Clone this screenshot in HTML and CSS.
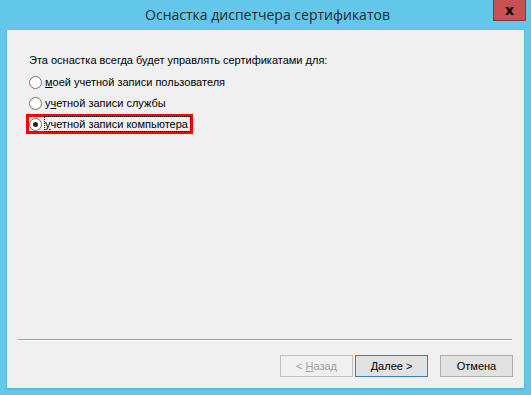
FILE: index.html
```html
<!DOCTYPE html>
<html lang="ru">
<head>
    <meta charset="UTF-8">
    <title>Оснастка диспетчера сертификатов</title>
    <link rel="stylesheet" href="styles.css">
</head>
<body>
    <div class="window">
        <div class="titlebar">
            <span></span>
            <div class="title">Оснастка диспетчера сертификатов</div>
            <button class="close">x</button>
        </div>
        <div class="client">
            <div class="content">
                <p class="intro">Эта оснастка всегда будет управлять сертификатами для:</p>
                <label class="option">
                    <span class="radio"></span>
                    <span><u>м</u>оей учетной записи пользователя</span>
                </label>
                <label class="option">
                    <span class="radio"></span>
                    <span>у<u>ч</u>етной записи службы</span>
                </label>
                <label class="option highlight">
                    <span class="radio checked"></span>
                    <span class="focus"><u>у</u>четной записи компьютера</span>
                </label>
            </div>
            <div class="separator"></div>
            <div class="buttons">
                <button class="btn disabled">&lt; <u>Н</u>азад</button>
                <button class="btn default"><u>Д</u>алее &gt;</button>
                <button class="btn cancel">Отмена</button>
            </div>
        </div>
    </div>
</body>
</html>
```

FILE: styles.css
```css
body {
    margin: 0;
    background-color: #63c7e9;
    font-family: "Liberation Sans", Arial, sans-serif;
}

.window {
    width: 531px;
    height: 395px;
    display: flex;
    flex-direction: column;
}

.titlebar {
    height: 30px;
    display: grid;
    grid-template-columns: 1fr auto 1fr;
    align-items: start;
}

.title {
    font-family: "Open Sans", sans-serif;
    font-size: 14px;
    color: #1e2a30;
    line-height: 30px;
    padding-left: 4px;
}

.close {
    justify-self: end;
    margin-right: 5px;
    width: 33px;
    height: 21px;
    background-color: #c75050;
    border: 1px solid #7d3b3b;
    border-top: none;
    color: #000;
    font-family: "DejaVu Sans", sans-serif;
    font-weight: bold;
    font-size: 14px;
    line-height: 16px;
    padding: 0;
}

.client {
    margin: 0 7px;
    height: 358px;
    background-color: #f0f0f0;
    display: flex;
    flex-direction: column;
    box-shadow: 0 1px 2px rgba(0, 0, 0, 0.15);
}

.content {
    flex: 1;
    padding: 23px 0 0 22px;
    font-size: 11px;
    color: #000;
    display: flex;
    flex-direction: column;
    align-items: flex-start;
}

.intro {
    margin: 0 0 5px;
    line-height: 14px;
}

.option {
    display: flex;
    align-items: center;
    gap: 3px;
    height: 20px;
    margin-bottom: 1px;
}

.radio {
    width: 11px;
    height: 11px;
    border: 1px solid #707070;
    border-radius: 50%;
    background-color: #fff;
    display: flex;
    align-items: center;
    justify-content: center;
}

.radio.checked::after {
    content: "";
    width: 5px;
    height: 5px;
    border-radius: 50%;
    background-color: #222;
}

.highlight {
    margin-left: -3px;
    border: 3px solid #ff0000;
    height: 14px;
}

.focus {
    outline: 1px dotted #000;
    line-height: 14px;
    padding-right: 2px;
}

.separator {
    margin: 0 12px 0 11px;
    border-top: 1px solid #a0a0a0;
    border-bottom: 1px solid #fff;
}

.buttons {
    display: flex;
    justify-content: flex-end;
    padding: 14px 11px 11px;
}

.btn {
    width: 73px;
    height: 22px;
    font-family: "Liberation Sans", Arial, sans-serif;
    font-size: 11px;
    padding: 0;
    background-color: #e1e1e1;
    border: 1px solid #adadad;
    color: #000;
}

.btn.disabled {
    background-color: #f0f0f0;
    border-color: #bfbfbf;
    color: #a0a0a0;
    margin-right: 2px;
}

.btn.default {
    border-color: #3c7fb1;
    margin-right: 12px;
}
```
